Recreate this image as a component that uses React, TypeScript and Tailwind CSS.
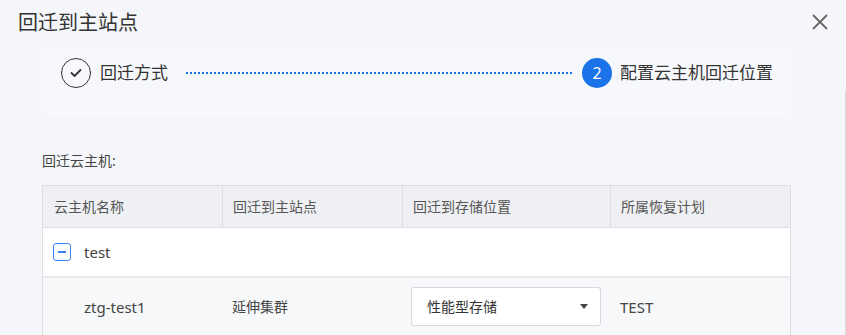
import React from "react";

const font = { fontFamily: '"Noto Sans", "Noto Sans CJK SC", sans-serif' };

export default function App() {
  return (
    <div className="relative w-[846px] h-[335px] overflow-hidden bg-[#f5f6f9] text-[#333]" style={font}>
      {/* header */}
      <div className="flex items-center justify-between h-[44px] pl-[18px] pr-[18px]">
        <div className="text-[20px] leading-none text-[#333] pt-[1px]">回迁到主站点</div>
        <svg width="16" height="16" viewBox="0 0 16 16" className="mt-[-1px]">
          <path d="M1.5 1.5 L14.5 14.5 M14.5 1.5 L1.5 14.5" stroke="#666" strokeWidth="1.8" strokeLinecap="round" />
        </svg>
      </div>
      <div className="pl-[42px] pr-[55px]">
        {/* stepper */}
        <div className="mt-[6px] h-[67px] bg-[#f7f8fb] pt-[8px] pl-[19px] pr-[18px]">
          <div className="flex items-center h-[30px]">
            <div className="flex items-center">
              <div className="w-[30px] h-[30px] rounded-full border border-[#333] flex items-center justify-center">
                <svg width="12" height="10" viewBox="0 0 12 10">
                  <path d="M1.5 5 L4.5 8 L10.5 2" fill="none" stroke="#333" strokeWidth="1.8" strokeLinecap="round" strokeLinejoin="round" />
                </svg>
              </div>
              <span className="ml-[9px] text-[17px] text-[#333]">回迁方式</span>
            </div>
            <div className="flex-1 ml-[18px] mr-[10px] border-t-2 border-dotted border-[#1a73e8] h-0 mt-[-1px]" />
            <div className="flex items-center">
              <div className="w-[30px] h-[30px] rounded-full bg-[#1a73e8] text-white flex items-center justify-center text-[16px]">2</div>
              <span className="ml-[8px] text-[17px] text-[#333]">配置云主机回迁位置</span>
            </div>
          </div>
        </div>
        {/* label */}
        <div className="mt-[34px] text-[14px] leading-[20px] text-[#444]">回迁云主机:</div>
        {/* table */}
        <div className="mt-[14px] border border-[#dcdee4] text-[14px]">
          <div className="grid grid-cols-[180px_180px_208px_1fr] h-[42px] bg-[#eff0f4] border-b border-[#dcdee4] text-[#555]">
            <div className="flex items-center pl-[11px] border-r border-[#dcdee4]">云主机名称</div>
            <div className="flex items-center pl-[10px] border-r border-[#dcdee4]">回迁到主站点</div>
            <div className="flex items-center pl-[10px] border-r border-[#dcdee4]">回迁到存储位置</div>
            <div className="flex items-center pl-[10px]">所属恢复计划</div>
          </div>
          <div className="h-[50px] bg-white flex items-center pl-[10px] border-b-2 border-[#e8e9ed]">
            <div className="w-[18px] h-[18px] rounded-[3px] border border-[#3b82f6] flex items-center justify-center">
              <div className="w-[8px] h-[1.5px] bg-[#3b82f6]" />
            </div>
            <span className="ml-[13px] text-[15px] text-[#444]">test</span>
          </div>
          <div className="grid grid-cols-[180px_180px_208px_1fr] h-[70px] bg-[#f7f8fa] text-[#444]">
            <div className="flex items-start pt-[18px] pl-[41px] text-[15px]">ztg-test1</div>
            <div className="flex items-start pt-[18px] pl-[9px]">延伸集群</div>
            <div className="pl-[8px] pt-[9px]">
              <div className="h-[39px] w-[190px] bg-white border border-[#d6d8dd] rounded-[3px] flex items-center justify-between pl-[15px] pr-[12px]">
                <span className="text-[#333]">性能型存储</span>
                <svg width="8" height="5" viewBox="0 0 8 5"><path d="M0 0 L8 0 L4 5 Z" fill="#444" /></svg>
              </div>
            </div>
            <div className="flex items-start pt-[18px] pl-[9px] text-[15px]">TEST</div>
          </div>
        </div>
      </div>
      <div className="absolute right-0 top-[91px] bottom-0 w-px bg-[#d8dadf]" />
    </div>
  );
}
